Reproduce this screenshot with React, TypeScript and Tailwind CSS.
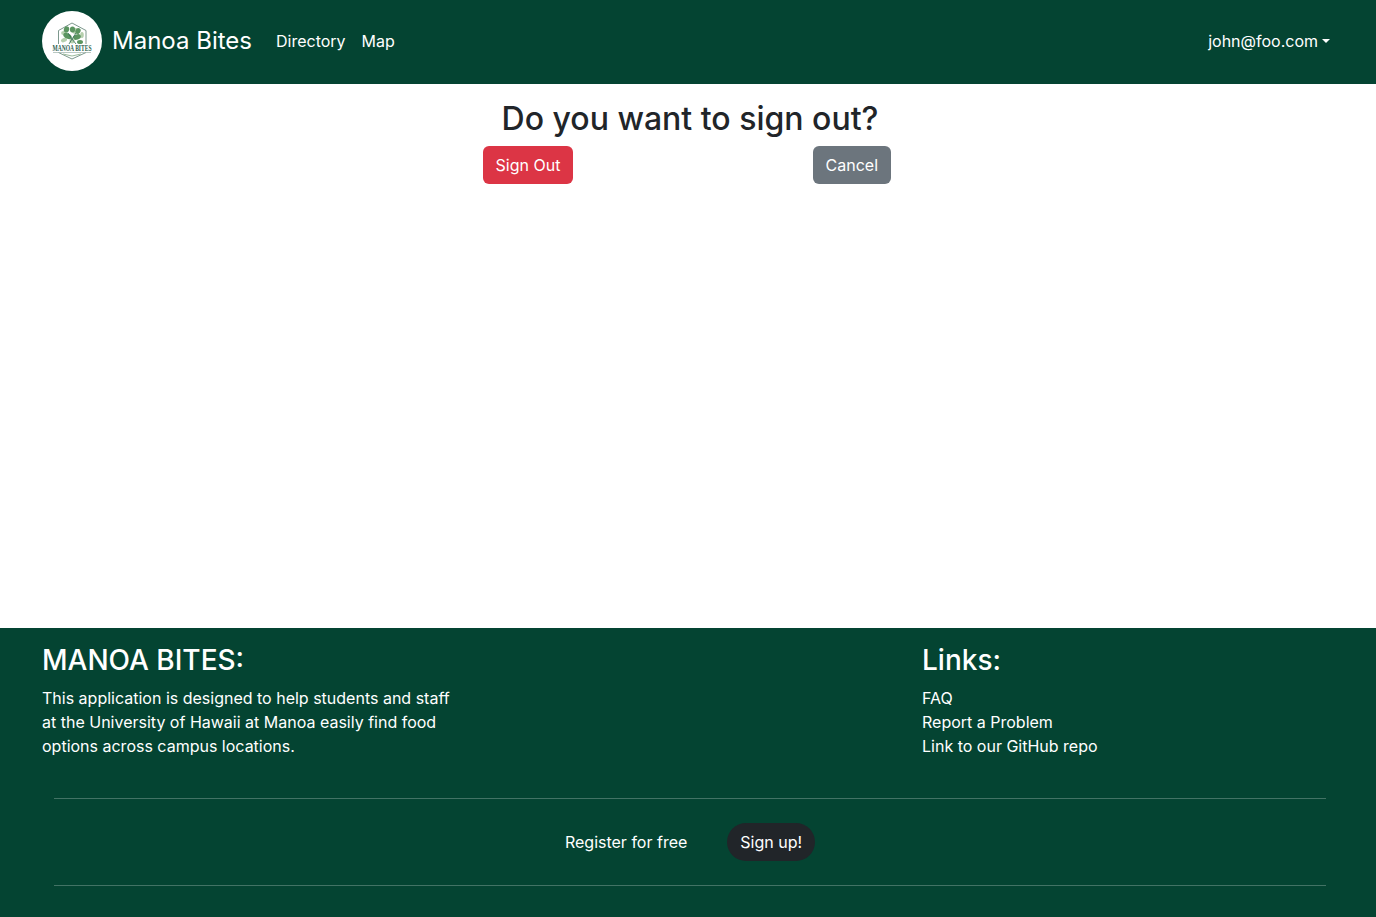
import React from 'react';

function Logo() {
  return (
    <svg className="shrink-0 overflow-visible" width="60" height="60" viewBox="0 0 60 60" aria-hidden="true">
      <circle cx="30" cy="30" r="30" fill="#fff" />
      <path d="M16.500 33V19.500L30 12l14 7.500V33M16.500 41.500L30 48l14-6.500" fill="none" stroke="#7d988d" strokeWidth="1" />
      <g fill="#b5cfad">
        <ellipse cx="21.500" cy="22" rx="2.400" ry="2" />
        <ellipse cx="40" cy="24" rx="1.800" ry="3" />
        <ellipse cx="22" cy="29" rx="3.200" ry="2" transform="rotate(-25 22 29)" />
        <circle cx="30" cy="30" r="2.500" />
        <ellipse cx="34" cy="20" rx="4" ry="3" />
      </g>
      <g fill="#5b9560">
        <ellipse cx="24.500" cy="18.500" rx="2.600" ry="3.200" transform="rotate(20 24.500 18.500)" />
        <ellipse cx="30.500" cy="18.500" rx="2.600" ry="3" />
        <ellipse cx="36" cy="20" rx="2.400" ry="3" transform="rotate(35 36 20)" />
        <ellipse cx="25.500" cy="25" rx="4.500" ry="2.600" transform="rotate(28 25.500 25)" />
        <ellipse cx="35" cy="26" rx="4" ry="2.600" transform="rotate(-20 35 26)" />
        <ellipse cx="38" cy="31" rx="3" ry="2" />
      </g>
      <path d="M27 33l3-5 4 5M30 28l4-6M30 28l-4-6" fill="none" stroke="#2f6850" strokeWidth=".8" />
      <path d="M21 43l9 2 9-2" fill="none" stroke="#9ab99a" strokeWidth="1" />
      <path d="M11 41.500h38" fill="none" stroke="#9bb0a7" strokeWidth=".7" />
      <text x="30" y="39.800" textAnchor="middle" textLength="39" lengthAdjust="spacingAndGlyphs" fontFamily="Liberation Serif, serif" fontWeight="700" fontSize="7.400" fill="#315f50">MANOA BITES</text>
    </svg>
  );
}

export default function App() {
  return (
    <div className="flex h-[917px] flex-col overflow-hidden bg-white font-['Inter',sans-serif] text-base leading-6 text-[#212529]">
      <nav className="flex h-[84px] shrink-0 items-center bg-[#044432] px-[42px] pb-0.5 text-white">
        <a href="#" className="flex items-center gap-2.5">
          <Logo />
          <span className="text-2xl leading-9">Manoa Bites</span>
        </a>
        <a href="#" className="ml-6">Directory</a>
        <a href="#" className="ml-4">Map</a>
        <button className="ml-auto mr-1 flex items-center gap-1">
          john@foo.com
          <span className="border-x-[4.8px] border-t-[4.8px] border-x-transparent border-t-white" />
        </button>
      </nav>

      <main className="flex flex-1 flex-col items-center pt-4">
        <h2 className="ml-1 text-[32px] font-medium leading-[38.4px]">Do you want to sign out?</h2>
        <div className="mt-2 flex w-[408px] -translate-x-px justify-between text-white">
          <button className="h-[38px] w-[90px] whitespace-nowrap rounded-md bg-[#dc3545]">Sign Out</button>
          <button className="h-[38px] rounded-md bg-[#6c757d] px-[13px]">Cancel</button>
        </div>
      </main>

      <footer className="h-[289px] shrink-0 bg-[#044432] px-[42px] pt-4 text-white">
        <div className="flex">
          <section className="w-[880px]">
            <h3 className="mb-2 text-[28px] font-medium leading-[33.6px]">MANOA BITES:</h3>
            <p className="w-[416px]">
              This application is designed to help students and staff at the University of Hawaii at Manoa easily find food options across campus locations.
            </p>
          </section>
          <section className="flex flex-col items-start">
            <h3 className="mb-2 text-[28px] font-medium leading-[33.6px]">Links:</h3>
            <a href="#">FAQ</a>
            <a href="#">Report a Problem</a>
            <a href="#">Link to our GitHub repo</a>
          </section>
        </div>
        <div className="ml-3 mr-2 mt-10 flex h-[88px] items-center justify-center gap-10 border-y border-white/25">
          <span>Register for free</span>
          <button className="h-[38px] rounded-full bg-[#212529] px-[13px]">Sign up!</button>
        </div>
      </footer>
    </div>
  );
}
